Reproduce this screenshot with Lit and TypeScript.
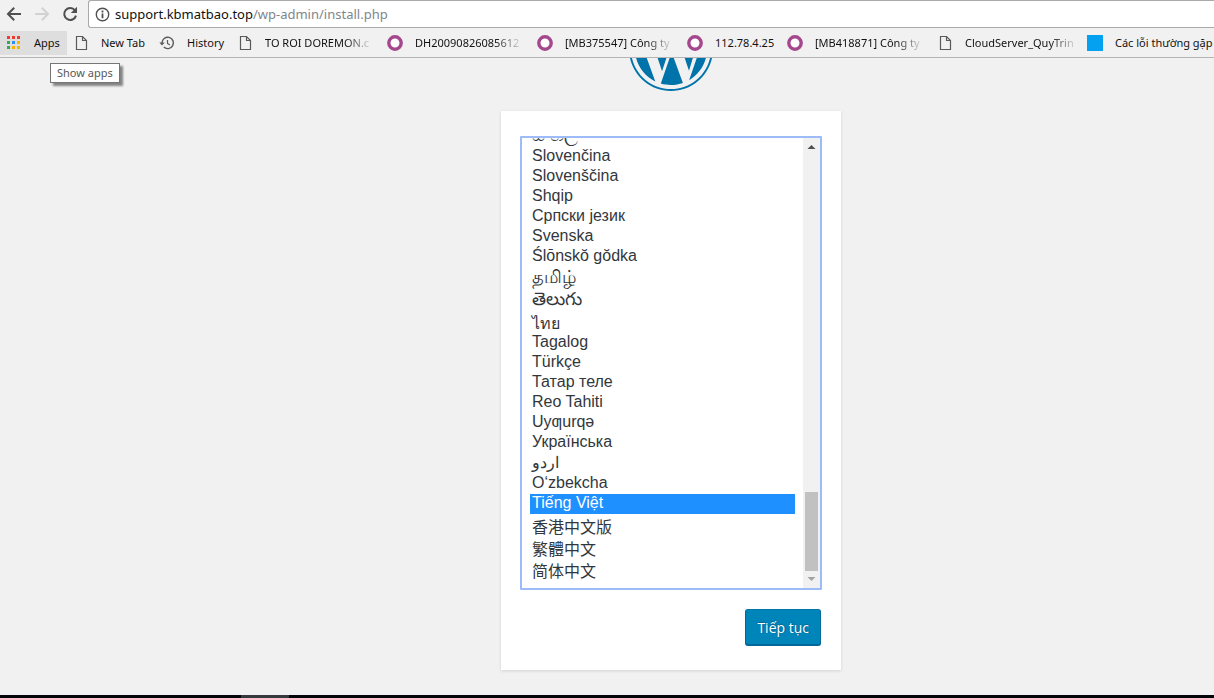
import { LitElement, html, css, svg } from "lit";
import { customElement, query } from "lit/decorators.js";

type IconName = "apps" | "page" | "history" | "ring" | "square";

interface Bookmark {
  icon: IconName;
  label: string;
  kind: string;
}

interface Language {
  code: string;
  name: string;
  kind?: string;
}

const BOOKMARKS: Bookmark[] = [
  { icon: "apps", label: "Apps", kind: "apps" },
  { icon: "page", label: "New Tab", kind: "tab" },
  { icon: "history", label: "History", kind: "hist" },
  { icon: "page", label: "TO ROI DOREMON.c", kind: "full" },
  { icon: "ring", label: "DH20090826085612", kind: "full" },
  { icon: "ring", label: "[MB375547] Công ty", kind: "full" },
  { icon: "ring", label: "112.78.4.25", kind: "short" },
  { icon: "ring", label: "[MB418871] Công ty", kind: "full" },
  { icon: "page", label: "CloudServer_QuyTrin", kind: "full" },
  { icon: "square", label: "Các lỗi thường gặp", kind: "last" },
];

const LANGUAGES: Language[] = [
  { code: "si_LK", name: "සිංහල", kind: "indic" },
  { code: "sk_SK", name: "Slovenčina" },
  { code: "sl_SI", name: "Slovenščina" },
  { code: "sq", name: "Shqip" },
  { code: "sr_RS", name: "Српски језик" },
  { code: "sv_SE", name: "Svenska" },
  { code: "szl", name: "Ślōnskŏ gŏdka" },
  { code: "ta_IN", name: "தமிழ்", kind: "indic" },
  { code: "te", name: "తెలుగు", kind: "indic" },
  { code: "th", name: "ไทย", kind: "tall" },
  { code: "tl", name: "Tagalog" },
  { code: "tr_TR", name: "Türkçe" },
  { code: "tt_RU", name: "Татар теле" },
  { code: "tah", name: "Reo Tahiti" },
  { code: "ug_CN", name: "Uyƣurqə" },
  { code: "uk", name: "Українська" },
  { code: "ur", name: "اردو", kind: "arabic" },
  { code: "uz_UZ", name: "O‘zbekcha" },
  { code: "vi", name: "Tiếng Việt" },
  { code: "zh_HK", name: "香港中文版", kind: "tall" },
  { code: "zh_TW", name: "繁體中文", kind: "tall" },
  { code: "zh_CN", name: "简体中文", kind: "tall" },
];

const APP_COLORS = [
  "#f13a30", "#f13a30", "#f13a30",
  "#34a853", "#2e8df5", "#fbb300",
  "#34a853", "#fbb300", "#fbb300",
];

const icons = {
  apps: svg`${APP_COLORS.map(
    (c, i) => svg`<rect x=${1 + (i % 3) * 5} y=${1 + Math.floor(i / 3) * 5} width="3" height="3" fill=${c}/>`
  )}`,
  page: svg`<path d="M3.5 1.5h6l4 4v9h-10z M9.5 1.5v4h4" fill="none" stroke="#5a5a5a" stroke-width="1.2"/>`,
  history: svg`<path d="M3 8a5.7 5.7 0 1 1 1.8 4.1" fill="none" stroke="#5a5a5a" stroke-width="1.4"/><path d="M0.3 7.6h5.4L3 10.4z" fill="#5a5a5a"/><path d="M8.5 5v3.4l2.4 1.5" fill="none" stroke="#5a5a5a" stroke-width="1.2"/>`,
  ring: svg`<circle cx="8" cy="8" r="6.2" fill="#fff" stroke="#a4478c" stroke-width="3.4"/>`,
  square: svg`<path d="M0 0h16v16H0z" fill="#03a1ef"/>`,
};

const wordpressMark = svg`
  <path d="m8.708 61.26c0 20.802 12.089 38.779 29.619 47.298l-25.069-68.686c-2.916 6.536-4.55 13.769-4.55 21.388z"/>
  <path d="m96.74 58.608c0-6.495-2.333-10.993-4.334-14.494-2.664-4.329-5.161-7.995-5.161-12.324 0-4.831 3.664-9.328 8.825-9.328.233 0 .454.029.681.042-9.35-8.566-21.807-13.796-35.489-13.796-18.36 0-34.513 9.42-43.91 23.688 1.233.037 2.395.063 3.382.063 5.497 0 14.006-.667 14.006-.667 2.833-.167 3.167 3.994.337 4.329 0 0-2.847.335-6.015.501l19.138 56.925 11.501-34.493-8.188-22.434c-2.83-.166-5.511-.501-5.511-.501-2.832-.166-2.5-4.496.332-4.329 0 0 8.679.667 13.843.667 5.496 0 14.006-.667 14.006-.667 2.835-.167 3.168 3.994.337 4.329 0 0-2.853.335-6.015.501l18.992 56.494 5.242-17.517c2.272-7.269 4.001-12.49 4.001-16.989z"/>
  <path d="m62.184 65.857-15.768 45.819c4.708 1.384 9.687 2.141 14.846 2.141 6.12 0 11.989-1.058 17.452-2.979-.141-.225-.269-.464-.374-.724z"/>
  <path d="m107.376 36.046c.226 1.674.354 3.471.354 5.404 0 5.333-.996 11.328-3.996 18.824l-16.053 46.413c15.624-9.111 26.133-26.038 26.133-45.426.001-9.137-2.333-17.729-6.438-25.215z"/>
  <path d="m61.262 0c-33.779 0-61.262 27.481-61.262 61.26 0 33.783 27.483 61.263 61.262 61.263 33.778 0 61.265-27.48 61.265-61.263-.001-33.779-27.487-61.26-61.265-61.26zm0 119.715c-32.23 0-58.453-26.223-58.453-58.455 0-32.23 26.222-58.451 58.453-58.451 32.229 0 58.45 26.221 58.45 58.451 0 32.232-26.221 58.455-58.45 58.455z"/>`;

@customElement("browser-chrome")
class BrowserChrome extends LitElement {
  static styles = css`
    :host {
      display: block;
      position: relative;
      background: #f1f1f1;
      border-bottom: 1px solid #b4b4b4;
      font-family: "Noto Sans", "Open Sans", sans-serif;
    }
    .nav {
      display: flex;
      height: 28px;
      align-items: stretch;
    }
    .tool {
      width: 28px;
      padding: 0;
      border: 0;
      background: none;
      display: flex;
      align-items: center;
      justify-content: center;
    }
    .tools {
      display: flex;
      width: 88px;
    }
    .address {
      flex: 1;
      display: flex;
      align-items: center;
      gap: 5px;
      padding-left: 6px;
      box-sizing: border-box;
      border: 1px solid #a9a9a9;
      border-right: 0;
      border-radius: 3px 0 0 3px;
      background: #fff;
      font-size: 13px;
      line-height: 20px;
      color: #80868b;
      white-space: nowrap;
    }
    .host {
      color: #111;
    }
    .bookmarks {
      display: flex;
      height: 29px;
      overflow: hidden;
    }
    .bookmark {
      flex: none;
      display: flex;
      align-items: center;
      gap: 12px;
      box-sizing: border-box;
      height: 24px;
      margin-top: 3px;
      padding: 0 6px;
      color: #111;
      font-size: 11px;
      line-height: 18px;
      text-decoration: none;
      white-space: nowrap;
    }
    .bookmark svg {
      flex: none;
    }
    .apps {
      width: 67px;
      background: #dedede;
    }
    .tab {
      width: 86px;
    }
    .hist {
      width: 78px;
    }
    .full {
      width: 150px;
    }
    .short {
      width: 100px;
    }
    .full .label {
      mask-image: linear-gradient(to right, #000 calc(100% - 24px), rgba(0, 0, 0, 0.15));
    }
    .tip {
      position: absolute;
      left: 50px;
      top: 63px;
      box-sizing: border-box;
      height: 20px;
      padding: 0 6px;
      border: 1px solid #767676;
      background: #fff;
      box-shadow: 3px 3px 2px rgba(0, 0, 0, 0.45);
      color: #575757;
      font-size: 11px;
      line-height: 18px;
      white-space: nowrap;
    }
  `;

  render() {
    return html`
      <div class="nav">
        <div class="tools">
          <button class="tool" aria-label="Back">
            <svg width="16" height="16" viewBox="0 0 16 16" fill="none" stroke="#505050" stroke-width="2">
              <path d="M15 8H2.5M8.2 1.8L2 8l6.2 6.2" />
            </svg>
          </button>
          <button class="tool" aria-label="Forward" disabled>
            <svg width="16" height="16" viewBox="0 0 16 16" fill="none" stroke="#d2d2d2" stroke-width="2">
              <path d="M1 8h12.5M7.8 1.8L14 8l-6.2 6.2" />
            </svg>
          </button>
          <button class="tool" aria-label="Reload">
            <svg width="16" height="16" viewBox="0 0 16 16">
              <path d="M13 4.3A6 6 0 1 0 14 9.6" fill="none" stroke="#505050" stroke-width="2" />
              <path d="M15 0.8V7H8.8z" fill="#505050" />
            </svg>
          </button>
        </div>
        <div class="address">
          <svg width="15" height="15" viewBox="0 0 15 15" fill="none" stroke="#505050">
            <circle cx="7.5" cy="7.5" r="6.2" stroke-width="1.4" />
            <path d="M7.5 6.4v4.8M7.5 3.6v1.8" stroke-width="1.8" />
          </svg>
          <span><span class="host">support.kbmatbao.top</span>/wp-admin/install.php</span>
        </div>
      </div>
      <nav class="bookmarks" aria-label="Bookmarks">
        ${BOOKMARKS.map(
          (b) => html`<a class="bookmark ${b.kind}" href="#">
            <svg width="16" height="16" viewBox="0 0 16 16">${icons[b.icon]}</svg>
            <span class="label">${b.label}</span>
          </a>`
        )}
      </nav>
      <div class="tip" role="tooltip">Show apps</div>
    `;
  }
}

@customElement("language-setup")
class LanguageSetup extends LitElement {
  @query("select") private list!: HTMLSelectElement;

  static styles = css`
    :host {
      display: block;
    }
    .logo {
      display: flex;
      justify-content: center;
      align-items: flex-end;
      height: 33px;
      margin-bottom: 20px;
      overflow: hidden;
    }
    .logo svg {
      flex: none;
    }
    .card {
      box-sizing: border-box;
      max-width: 340px;
      margin: 0 auto;
      padding: 25px 19px 24px;
      background: #fff;
      box-shadow: 0 1px 3px rgba(0, 0, 0, 0.13);
    }
    .frame {
      display: flex;
      height: 450px;
      border: 2px solid #9dbcf7;
      border-radius: 1px;
      background: #fff;
    }
    .list {
      flex: 1;
      min-width: 0;
      height: 450px;
      box-sizing: border-box;
      margin: 0;
      padding: 8px;
      border: 0;
      outline: 0;
      background: #fff;
      color: #32373c;
      font-family: "Liberation Sans", "Noto Sans", "Noto Sans CJK SC", sans-serif;
      font-size: 16px;
      scrollbar-width: none;
    }
    .list option {
      box-sizing: border-box;
      height: 20px;
      min-height: 20px;
      padding: 0 2px;
      line-height: 18px;
    }
    .list .tall {
      height: 22px;
    }
    .list .indic {
      height: 22px;
      font-size: 18px;
      line-height: 22px;
    }
    .list .arabic {
      height: 21px;
    }
    .list option:checked {
      background: #1e90ff linear-gradient(#1e90ff, #1e90ff);
      color: #fff;
    }
    .scroll {
      width: 17px;
      display: flex;
      flex-direction: column;
      align-items: center;
      background: #f1f1f1;
    }
    .arrow {
      flex: none;
    }
    .thumb {
      width: 13px;
      height: 79px;
      margin-top: auto;
      background: #c1c1c1;
    }
    .actions {
      display: flex;
      justify-content: flex-end;
      margin-top: 19px;
      padding-right: 1px;
    }
    .submit {
      height: 37px;
      padding: 0 11px;
      border: 1px solid #006799;
      border-top-color: #0073aa;
      border-radius: 3px;
      background: #0085ba;
      box-shadow: inset 0 -1px 0 #006799;
      color: #fff;
      font-family: "Open Sans", sans-serif;
      font-size: 14px;
      text-shadow: 0 -1px 1px #006799, 1px 0 1px #006799;
    }
  `;

  firstUpdated() {
    this.list.value = "vi";
    requestAnimationFrame(() => {
      this.list.scrollTop = this.list.scrollHeight;
    });
  }

  render() {
    return html`
      <div class="logo">
        <svg width="84" height="84" viewBox="0 0 122.52 122.523" fill="#0073aa" role="img" aria-label="WordPress">
          ${wordpressMark}
        </svg>
      </div>
      <form class="card" @submit=${(e: Event) => e.preventDefault()}>
        <div class="frame">
          <select class="list" size="22" aria-label="Language">
            ${LANGUAGES.map(
              (l) => html`<option class=${l.kind ?? ""} value=${l.code} ?selected=${l.code === "vi"}>${l.name}</option>`
            )}
          </select>
          <div class="scroll" aria-hidden="true">
            <svg class="arrow" width="17" height="17" viewBox="0 0 17 17"><path d="M4.5 11l4-4 4 4z" fill="#505050" /></svg>
            <div class="thumb"></div>
            <svg class="arrow" width="17" height="17" viewBox="0 0 17 17"><path d="M4.5 6l4 4 4-4z" fill="#a3a3a3" /></svg>
          </div>
        </div>
        <div class="actions"><button class="submit">Tiếp tục</button></div>
      </form>
    `;
  }
}

@customElement("app-root")
class AppRoot extends LitElement {
  static styles = css`
    :host {
      display: flex;
      flex-direction: column;
      min-height: 100vh;
      background: #f1f1f1;
    }
    .page {
      flex: 1;
      padding-left: 128px;
    }
    .taskbar {
      display: flex;
      height: 3px;
      padding-left: 241px;
      background: #02050a;
    }
    .running {
      width: 48px;
      background: #35383d;
    }
  `;

  render() {
    return html`
      <browser-chrome></browser-chrome>
      <main class="page"><language-setup></language-setup></main>
      <div class="taskbar"><div class="running"></div></div>
    `;
  }
}
